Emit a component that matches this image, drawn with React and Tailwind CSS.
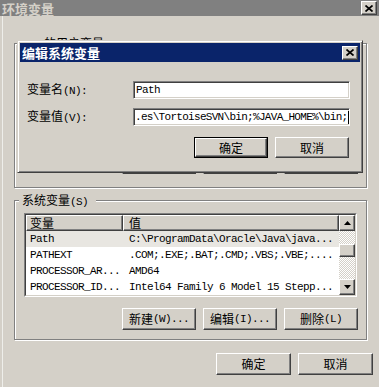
import React from "react";

const cjk = "font-['Noto_Sans_CJK_SC',sans-serif]";
const mono = "font-['Liberation_Mono','Noto_Sans_CJK_SC',monospace] text-[11px] tracking-[-0.6px]";
const raised =
  "border border-t-white border-l-white border-r-[#404040] border-b-[#404040] shadow-[inset_-1px_-1px_0_#808080] bg-[#d4d0c8]";
const etched = "border border-[#808080] shadow-[1px_1px_0_#fff,inset_1px_1px_0_#fff]";
const dither = "bg-[repeating-conic-gradient(#d4d0c8_0%_25%,#ffffff_0%_50%)] bg-[length:2px_2px]";

const L = ({ c, l }) => (
  <>
    <span className={cjk}>{c}</span>
    {l && <span className={mono}>{l}</span>}
  </>
);

const Btn = ({ children, className = "" }) => (
  <div className={`${raised} flex items-center justify-center text-[12px] leading-none text-black ${className}`}>
    {children}
  </div>
);

const CloseX = () => (
  <svg width="8" height="7" viewBox="0 0 8 7">
    <path d="M0.5 0.5 L7.5 6.5 M7.5 0.5 L0.5 6.5" stroke="#000" strokeWidth="1.7" />
  </svg>
);

const Arrow = ({ down }) => (
  <svg width="7" height="4" viewBox="0 0 7 4">
    <path d={down ? "M0 0 H7 L3.5 4 Z" : "M3.5 0 L7 4 H0 Z"} fill="#000" />
  </svg>
);

const rows = [
  ["Path", "C:\\ProgramData\\Oracle\\Java\\java..."],
  ["PATHEXT", ".COM;.EXE;.BAT;.CMD;.VBS;.VBE;...."],
  ["PROCESSOR_AR...", "AMD64"],
  ["PROCESSOR_ID...", "Intel64 Family 6 Model 15 Stepp..."],
];

const ActionRow = () => (
  <div className="flex justify-end gap-[7px] pr-[8px]">
    <Btn className="w-[74px] h-[22px]"><L c="新建" l="(W)..." /></Btn>
    <Btn className="w-[74px] h-[22px]"><L c="编辑" l="(I)..." /></Btn>
    <Btn className="w-[74px] h-[22px]"><L c="删除" l="(L)" /></Btn>
  </div>
);

export default function App() {
  return (
    <div className="w-[379px] h-[387px] bg-[#d4d0c8] relative overflow-hidden flex flex-col select-none">
      {/* outer window title */}
      <div className="h-[16px] bg-[#808080] flex items-center justify-between px-[2px]">
        <span className={`${cjk} text-[13px] font-bold text-[#d4d0c8] leading-none`}>环境变量</span>
        <div className={`${raised} w-[16px] h-[14px] flex items-center justify-center`}>
          <CloseX />
        </div>
      </div>

      <div className="pl-[2px] flex-1 flex flex-col">
        <div className="border-l border-[#eeeeea] flex-1 flex flex-col">
          <div className="pl-[11px] pr-[12px]">
            {/* user variables group (mostly hidden behind the dialog) */}
            <div className={`${etched} relative mt-[27px] h-[145px] flex flex-col`}>
              <div className="absolute top-[-9px] left-[26px] h-[6px] overflow-hidden px-[3px] bg-[#d4d0c8] text-[12px] leading-[16px]">
                <L c="的用户变量" l="(U)" />
              </div>
              <div className="mt-auto mb-[13px]">
                <ActionRow />
              </div>
            </div>

            {/* system variables group */}
            <div className={`${etched} relative mt-[12px] h-[140px]`}>
              <div className="absolute top-[-9px] left-[4px] h-[16px] leading-[16px] pl-[3px] pr-[8px] bg-[#d4d0c8] text-[12px]">
                <L c="系统变量" l="(S)" />
              </div>
              <div className="ml-[9px] mt-[12px] w-[333px] h-[84px] border border-t-[#808080] border-l-[#808080] border-b-white border-r-white">
                <div className="h-full border border-t-[#404040] border-l-[#404040] border-b-[#d4d0c8] border-r-[#d4d0c8] bg-white flex">
                  <div className="flex-1 flex flex-col overflow-hidden">
                    <div className="flex h-[16px] text-[12px] leading-none">
                      <div className={`${raised} w-[97px] flex items-center pl-[3px]`}>
                        <span className={cjk}>变量</span>
                      </div>
                      <div className={`${raised} flex-1 flex items-center pl-[5px]`}>
                        <span className={cjk}>值</span>
                      </div>
                    </div>
                    {rows.map(([k, v], i) => (
                      <div
                        key={k}
                        className={`flex h-[16px] leading-[16px] ${mono} text-black whitespace-nowrap ${
                          i === 0 ? "bg-[#e8e6e1]" : ""
                        }`}
                      >
                        <div className="w-[97px] pl-[4px] overflow-hidden">{k}</div>
                        <div className="flex-1 pl-[6px] overflow-hidden">{v}</div>
                      </div>
                    ))}
                  </div>
                  <div className="w-[16px] flex flex-col">
                    <div className={`${raised} h-[16px] flex items-center justify-center`}>
                      <Arrow />
                    </div>
                    <div className={`${dither} flex-1 flex flex-col`}>
                      <div className={`${raised} mt-[13px] h-[13px]`} />
                    </div>
                    <div className={`${raised} h-[16px] flex items-center justify-center`}>
                      <Arrow down />
                    </div>
                  </div>
                </div>
              </div>
              <div className="mt-[11px]">
                <ActionRow />
              </div>
            </div>
          </div>

          {/* main OK / Cancel */}
          <div className="mt-[13px] flex justify-end gap-[7px] pr-[6px]">
            <Btn className="w-[75px] h-[22px]"><span className={cjk}>确定</span></Btn>
            <Btn className="w-[75px] h-[22px]"><span className={cjk}>取消</span></Btn>
          </div>
        </div>
      </div>

      {/* edit dialog window on top */}
      <div className="absolute left-[17px] top-[40px] w-[346px] h-[133px] border border-t-[#d4d0c8] border-l-[#d4d0c8] border-r-[#404040] border-b-[#404040] bg-[#d4d0c8]">
        <div className="h-full p-[2px] shadow-[inset_1px_1px_0_#fff,inset_-1px_-1px_0_#808080] flex flex-col">
          <div className="h-[19px] bg-[#0a246a] flex items-center justify-between pl-[2px] pr-[2px]">
            <span className={`${cjk} text-[13px] font-bold text-white leading-none`}>编辑系统变量</span>
            <div className={`${raised} w-[16px] h-[14px] flex items-center justify-center`}>
              <CloseX />
            </div>
          </div>

          <div className="flex items-center mt-[19px] h-[18px] pl-[7px] text-[12px]">
            <div className="w-[106px]"><L c="变量名" l="(N):" /></div>
            <div className="w-[217px] h-[18px] border border-t-[#808080] border-l-[#808080] border-r-white border-b-white shadow-[inset_1px_1px_0_#404040,inset_-1px_-1px_0_#d4d0c8] bg-white flex items-center pl-[2px] overflow-hidden">
              <span className={`${mono} leading-none`}>Path</span>
            </div>
          </div>

          <div className="flex items-center mt-[9px] h-[18px] pl-[7px] text-[12px]">
            <div className="w-[106px]"><L c="变量值" l="(V):" /></div>
            <div className="w-[217px] h-[18px] border border-t-[#808080] border-l-[#808080] border-r-white border-b-white shadow-[inset_1px_1px_0_#404040,inset_-1px_-1px_0_#d4d0c8] bg-white flex items-center pl-[1px] overflow-hidden whitespace-nowrap">
              <span className={`${mono} tracking-[-0.7px] leading-none`}>.es\TortoiseSVN\bin;%JAVA_HOME%\bin;</span>
              <span className="w-[1px] h-[13px] bg-black ml-[1px] shrink-0" />
            </div>
          </div>

          <div className="flex justify-end gap-[7px] mt-[11px] pr-[11px]">
            <div className="border border-black">
              <Btn className="w-[72px] h-[19px]"><span className={cjk}>确定</span></Btn>
            </div>
            <Btn className="w-[74px] h-[21px]"><span className={cjk}>取消</span></Btn>
          </div>
        </div>
      </div>
    </div>
  );
}
